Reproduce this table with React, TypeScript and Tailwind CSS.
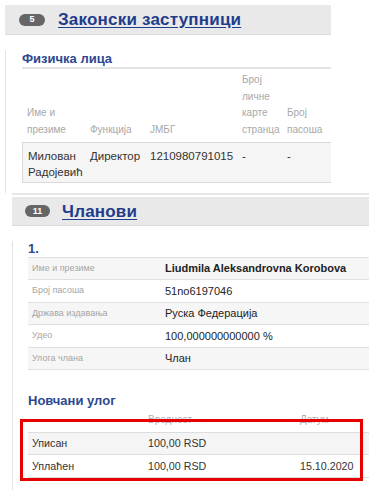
import React from 'react';

const personHead = [
  { w: 'w-[63px]', lines: ['Име и', 'презиме'] },
  { w: 'w-[60px]', lines: ['Функција'] },
  { w: 'w-[92px]', lines: ['ЈМБГ'] },
  { w: 'w-[45px]', lines: ['Број', 'личне', 'карте', 'странца'] },
  { w: 'w-[49px]', lines: ['Број', 'пасоша'] },
];

const memberRows = [
  { label: 'Име и презиме', value: 'Liudmila Aleksandrovna Korobova', bold: true },
  { label: 'Број пасоша', value: '51no6197046' },
  { label: 'Држава издавања', value: 'Руска Федерација' },
  { label: 'Удео', value: '100,000000000000 %' },
  { label: 'Улога члана', value: 'Члан' },
];

function Badge({ n }: { n: string }) {
  return (
    <span className="flex h-[12px] w-[26px] items-center justify-center rounded-full bg-[#666666] text-[9px] font-bold leading-none text-white">
      {n}
    </span>
  );
}

function SectionHeader({ n, title }: { n: string; title: string }) {
  return (
    <div className="flex h-[30px] items-center border-b border-[#dadada] bg-[#e9e9e9] pl-[14px]">
      <Badge n={n} />
      <a href="#" className="ml-[13px] text-[17px] font-bold leading-none tracking-[0.2px] text-[#1f3c8d] underline underline-offset-2">
        {title}
      </a>
    </div>
  );
}

export default function App() {
  return (
    <div className="min-h-screen bg-white pt-[5px] font-['Liberation_Sans',Arial,sans-serif]">
      {/* Законски заступници */}
      <div className="ml-[5px] w-[326px]">
        <SectionHeader n="5" title="Законски заступници" />
        <div className="border-l border-[#e2e2e2] pb-[10px] pl-[16px]">
          <h3 className="mt-[15px] border-b-2 border-[#e4e4e4] text-[13px] font-bold leading-[17px] text-[#2d4892]">Физичка лица</h3>
          <div className="flex items-end pb-[4px] pt-[3px]">
            {personHead.map((h, i) => (
              <div key={i} className={`${h.w} pl-[5px] text-[10px] leading-[16.5px] text-[#a8a8a8]`}>
                {h.lines.map((l) => (
                  <div key={l}>{l}</div>
                ))}
              </div>
            ))}
          </div>
          <div className="flex border border-r-0 border-[#d9d9d9] bg-[#f5f5f5] pb-[2px] pt-[5px] text-[11.5px] leading-[16px] text-[#333333]">
            <div className="w-[62px] pl-[5px]">
              <div>Милован</div>
              <div>Радојевић</div>
            </div>
            <div className="w-[60px] pl-[5px]">Директор</div>
            <div className="w-[92px] pl-[5px]">1210980791015</div>
            <div className="w-[45px] pl-[5px]">-</div>
            <div className="w-[49px] pl-[5px]">-</div>
          </div>
        </div>
      </div>

      {/* Чланови */}
      <div className="ml-[12px] border-t-2 border-[#e6e6e6] pt-[2px]">
        <div className="flex h-[29px] items-center border-b border-[#dadada] bg-[#e9e9e9] pl-[13px]">
          <span className="flex h-[12px] w-[25px] items-center justify-center rounded-full bg-[#666666] text-[9px] font-bold leading-none text-white">11</span>
          <a href="#" className="ml-[12px] text-[17px] font-bold leading-none tracking-[0.2px] text-[#1f3c8d] underline underline-offset-2">
            Чланови
          </a>
        </div>
        <div className="border-l border-[#e2e2e2] pb-[12px] pl-[15px]">
          <h3 className="mt-[15px] text-[13px] font-bold leading-[16px] text-[#2d4892]">1.</h3>
          <div className="border-b border-[#e0e0e0]">
            {memberRows.map((r, i) => (
              <div
                key={r.label}
                className={`flex h-[22.4px] items-center border-t border-[#e0e0e0] ${i % 2 === 0 ? 'bg-[#f6f6f6]' : 'bg-white'}`}
              >
                <div className="w-[133px] pl-[4px] text-[9px] text-[#a5a5a5]">{r.label}</div>
                <div className={`pl-[4px] text-[11px] text-[#222222] ${r.bold ? 'font-bold' : ''}`}>{r.value}</div>
              </div>
            ))}
          </div>

          <h3 className="mt-[23px] text-[13px] font-bold leading-[16px] text-[#2d4892]">Новчани улог</h3>
          <div className="relative">
            <div className="flex h-[23px] items-end pb-[6px] text-[10px] leading-[12px] text-[#b0b0b0]">
              <div className="w-[116px] pl-[4px]"></div>
              <div className="w-[152px] pl-[4px]">Вредност</div>
              <div className="pl-[4px]">Датум</div>
            </div>
            <div className="border-b border-[#dddddd] text-[10.7px] text-[#333333]">
              <div className="flex h-[22px] items-center border-t border-[#dddddd] bg-[#f5f5f5]">
                <div className="w-[116px] pl-[4px]">Уписан</div>
                <div className="w-[152px] pl-[4px]">100,00 RSD</div>
                <div className="pl-[4px]"></div>
              </div>
              <div className="flex h-[23px] items-center border-t border-[#dddddd] bg-white">
                <div className="w-[116px] pl-[4px]">Уплаћен</div>
                <div className="w-[152px] pl-[4px]">100,00 RSD</div>
                <div className="pl-[4px]">15.10.2020</div>
              </div>
            </div>
            <div className="absolute left-[-8px] top-[10px] h-[62px] w-[343px] border-[3px] border-[#e60000]"></div>
          </div>
        </div>
      </div>
    </div>
  );
}
